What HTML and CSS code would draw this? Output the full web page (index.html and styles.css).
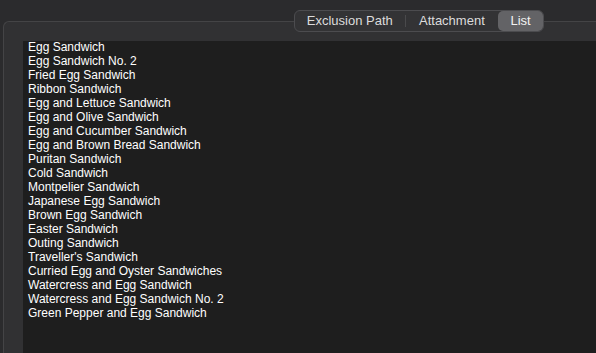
FILE: index.html
```html
<!DOCTYPE html>
<html>
<head>
<meta charset="utf-8">
<link rel="stylesheet" href="styles.css">
</head>
<body>
<div class="page">
  <div class="tabs-row">
    <div class="segmented">
      <div class="seg seg-excl">Exclusion Path</div>
      <div class="sep"></div>
      <div class="seg seg-att">Attachment</div>
      <div class="seg seg-list active">List</div>
    </div>
  </div>
  <div class="box">
    <div class="list">
      <div class="items">
        <div class="item">Egg Sandwich</div>
        <div class="item">Egg Sandwich No. 2</div>
        <div class="item">Fried Egg Sandwich</div>
        <div class="item">Ribbon Sandwich</div>
        <div class="item">Egg and Lettuce Sandwich</div>
        <div class="item">Egg and Olive Sandwich</div>
        <div class="item">Egg and Cucumber Sandwich</div>
        <div class="item">Egg and Brown Bread Sandwich</div>
        <div class="item">Puritan Sandwich</div>
        <div class="item">Cold Sandwich</div>
        <div class="item">Montpelier Sandwich</div>
        <div class="item">Japanese Egg Sandwich</div>
        <div class="item">Brown Egg Sandwich</div>
        <div class="item">Easter Sandwich</div>
        <div class="item">Outing Sandwich</div>
        <div class="item">Traveller's Sandwich</div>
        <div class="item">Curried Egg and Oyster Sandwiches</div>
        <div class="item">Watercress and Egg Sandwich</div>
        <div class="item">Watercress and Egg Sandwich No. 2</div>
        <div class="item">Green Pepper and Egg Sandwich</div>
      </div>
    </div>
  </div>
</div>
</body>
</html>
```

FILE: styles.css
```css
html, body {
  margin: 0;
  padding: 0;
  background: #2b2b2d;
  width: 596px;
  height: 353px;
  overflow: hidden;
  font-family: "Liberation Sans", Arial, sans-serif;
}
.page {
  padding-top: 10px;
  height: 343px;
  display: flex;
  flex-direction: column;
}
.tabs-row {
  display: flex;
  justify-content: flex-end;
  padding-right: 52px;
  position: relative;
  z-index: 2;
}
.segmented {
  display: flex;
  align-items: center;
  height: 20px;
  width: 248px;
  border: 1px solid #4c4c4f;
  border-radius: 6px;
  background: #333335;
  font-size: 13px;
  color: #dcdcdc;
}
.seg {
  height: 20px;
  line-height: 20px;
  text-align: center;
  box-sizing: border-box;
}
.seg-excl { width: 110px; }
.seg-att { width: 93px; }
.seg-list { width: 45px; }
.sep {
  width: 1px;
  height: 12px;
  background: #4a4a4c;
}
.seg.active {
  background: #636366;
  color: #f2f2f2;
  border-radius: 5px;
}
.box {
  margin-top: -11px;
  margin-left: 3px;
  flex: 1;
  border: 1px solid #444446;
  border-right: none;
  border-bottom: none;
  border-top-left-radius: 6px;
  background: #313133;
  padding: 19px 0 0 19px;
  display: flex;
  min-height: 0;
}
.list {
  flex: 1;
  background: #1e1e1e;
  padding: 0 0 0 5px;
  color: #ffffff;
  font-size: 12px;
  line-height: 14px;
}
.items {
  margin-top: -1px;
}
.item {
  white-space: nowrap;
}
```
